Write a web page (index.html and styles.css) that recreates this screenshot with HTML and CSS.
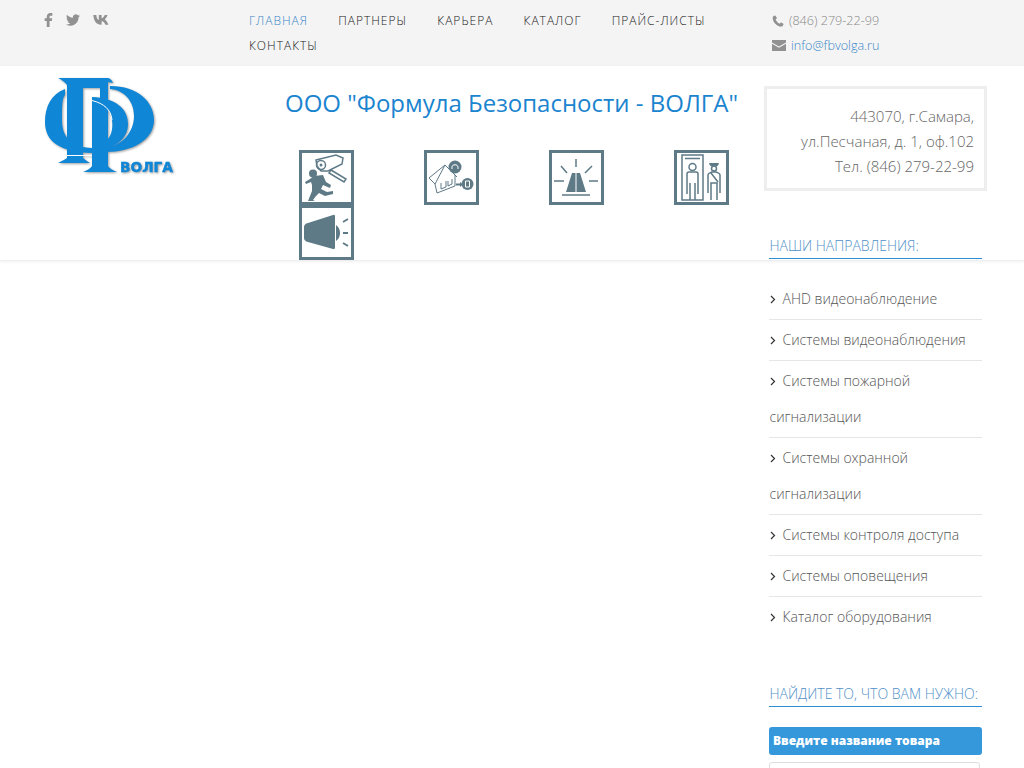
FILE: index.html
```html
<!DOCTYPE html>
<html lang="ru">
<head>
    <meta charset="UTF-8">
    <meta name="viewport" content="width=device-width, initial-scale=1.0">
    <title>Формула Безопасности - ВОЛГА</title>
    <link rel="stylesheet" href="styles.css">
</head>
<body>
    <div class="topbar">
        <div class="social">
            <a href="#" class="social-fb"><svg viewBox="0 0 10 16" width="9" height="14"><path d="M9.4 0H7.2C4.8 0 3 1.6 3 4.2V6H.6v3H3v7h3.2V9h2.6l.4-3H6.200V4.500c0-.9.3-1.500 1.500-1.500h1.700z"/></svg></a>
            <a href="#" class="social-tw"><svg viewBox="0 0 24 24" width="14" height="14"><path d="M23.953 4.57a10 10 0 01-2.825.775 4.958 4.958 0 002.163-2.723c-.951.555-2.005.959-3.127 1.184a4.92 4.92 0 00-8.384 4.482C7.69 8.095 4.067 6.13 1.64 3.162a4.822 4.822 0 00-.666 2.475c0 1.71.87 3.213 2.188 4.096a4.904 4.904 0 01-2.228-.616v.06a4.923 4.923 0 003.946 4.827 4.996 4.996 0 01-2.212.085 4.936 4.936 0 004.604 3.417 9.867 9.867 0 01-6.102 2.105c-.39 0-.779-.023-1.17-.067a13.995 13.995 0 007.557 2.209c9.053 0 13.998-7.496 13.998-13.985 0-.21 0-.42-.015-.63A9.935 9.935 0 0024 4.59z"/></svg></a>
            <a href="#" class="social-vk"><svg viewBox="0 0 17 10" width="17" height="10"><path d="M.3 0h3c.2 2.700 1.300 4.700 2.500 5.100V0h2.800v3.300C9.800 3.100 11 1.700 11.700 0h2.800c-.4 1.900-1.700 3.500-2.700 4.400 1.100.7 2.700 2.400 3.700 5.400h-3.100c-.7-2-1.900-3.400-3.800-3.600v3.600H8C3.600 9.800.7 6 .3 0z"/></svg></a>
        </div>
        <nav class="top-nav">
            <a href="#" class="active">Главная</a>
            <a href="#">Партнеры</a>
            <a href="#">Карьера</a>
            <a href="#">Каталог</a>
            <a href="#">Прайс-листы</a>
            <a href="#">Контакты</a>
        </nav>
        <div class="contacts">
            <div class="contact-row">
                <svg viewBox="0 0 14 14" width="12" height="12"><path d="M3.200.6L.9 1.900C.3 5.600 2.400 9 4.500 10.800c2 1.800 4.700 3.100 7.400 2.600l1.500-2.300c.2-.3.100-.6-.2-.8L10.900 8.800c-.3-.2-.6-.1-.8.100l-1.200 1.300C7.100 9.400 5 7.400 4.200 5.300l1.300-1.200c.2-.2.300-.5.100-.8L4 .8C3.800.5 3.500.400 3.200.6z"/></svg>
                <span>(846) 279-22-99</span>
            </div>
            <div class="contact-row">
                <svg viewBox="0 0 14 11" width="14" height="11"><path d="M0 0h14v2.400L7 6.400 0 2.400zM0 3.800l7 4 7-4V11H0z"/></svg>
                <a href="#">info@fbvolga.ru</a>
            </div>
        </div>
    </div>

    <header class="masthead">
        <a href="#" class="logo">
            <svg viewBox="40 74 140 106" width="140" height="106">
                <path d="M65 89C51 94 45 107 45 122c0 19 14 30 47 31v-5c-21-1-30-11-30-28 0-13 0-22 3-25z"/>
                <path d="M110 86c28 0 44 16 44 34 0 20-22 32-48 32v-5c16-1 28-15 28-31 0-15-10-26-24-27z"/>
                <path d="M92 97c23 1 36 11 36 27 0 12-8 20-20 24v-9c4-5 5-12 4-19-1-10-8-16-20-19z"/>
                <!-- top bar and first stem -->
                <path d="M58 78h49c3 0 5 2 6 5l-5-1v6H83v70c2 2 4 3 7 5H58c3-2 7-3 9-5V85c-2-3-5-5-9-7z"/>
                <!-- second stem -->
                <path d="M100 88h8v78c2 3 5 4 9 6H83c4-2 7-3 9-6V98h8z"/>
                <path class="logo-cut" d="M92 100.500c12 3 19 9 20 19.500"/>
                <path class="logo-cut" d="M67 155.500h25"/>
                <text x="120" y="172" textLength="53" lengthAdjust="spacingAndGlyphs">ВОЛГА</text>
            </svg>
        </a>
        <div class="head-center">
            <h1 class="company">ООО "Формула Безопасности - ВОЛГА"</h1>
            <div class="services">
                <a href="#" class="service"><span class="service-box">
                    <svg viewBox="0 0 49 49">
                        <path class="md" d="M14 7l20-5 7 3-1 6-14 7-7 0-4-5z"/>
                        <circle class="md" cx="19" cy="12" r="4.500"/>
                        <circle class="sol" cx="19" cy="12" r="1.500"/>
                        <path class="md" d="M29 17l15 9-2 3-15-9z"/>
                        <circle class="sol" cx="11" cy="20.500" r="4"/>
                        <path class="sol" d="M12 23l9-1 3 7 5 3-1 3-7-3-2 4 6 3 6-1 0 3-8 2-6-3-3 3-3 4 2 1H6l4-10 0-6-1-3-5 2-1-2 5-3z"/>
                    </svg>
                </span></a>
                <a href="#" class="service"><span class="service-box">
                    <svg viewBox="0 0 49 49">
                        <path class="ln" d="M2 25L18 12l12 12M18 12L8 31 2 25M8 31l2 9 18-7V22"/>
                        <path class="ln" d="M14 30v6l5-2v-6M21 28v5l4-2v-5"/>
                        <circle class="sol" cx="28" cy="14" r="6.500"/>
                        <circle class="sol" cx="40.500" cy="31" r="6"/>
                        <path class="ln-w" d="M25 16v-2c0-3 6-3 6 0v2M38.500 28h4v6h-4z"/>
                        <path class="thk" d="M29 31.500h4"/>
                        <path class="sol" d="M33 29l3 2.500-3 2.500z"/>
                    </svg>
                </span></a>
                <a href="#" class="service"><span class="service-box">
                    <svg viewBox="0 0 49 49">
                        <path class="sol" d="M20 20h3.500v19H14zM24.500 20H28l6 19h-9.500z"/>
                        <path class="md" d="M10 42h28M24 6v8M9 13l6 7M40 13l-7 7M2 28h10M37 28h9"/>
                    </svg>
                </span></a>
                <a href="#" class="service"><span class="service-box">
                    <svg viewBox="0 0 49 49">
                        <path class="md" d="M5 47V2h21v45zM8 5.500h15"/>
                        <circle class="md" cx="15.500" cy="14" r="3.500"/>
                        <path class="md" d="M10 41V21c0-1 1-2 2-2h7c1 0 2 1 2 2v20M13 47V30M18 47V30"/>
                        <path class="thk-s" d="M32.500 10.500h9l-1 2h-7z"/>
                        <circle class="md" cx="37" cy="15.500" r="2.500"/>
                        <path class="md" d="M31 40V22c0-2 2-2 4-3h4c2 1 4 1 4 3v18M34 47V30h6v17M34 20l7 9"/>
                    </svg>
                </span></a>
                <a href="#" class="service"><span class="service-box">
                    <svg viewBox="0 0 49 49">
                        <path class="sol" d="M6 15L31 7c1.500-.5 2 .5 2 1.500v31c0 1-.5 2-2 1.500L6 34c-2.500-.5-4-2-4-4V19c0-2 1.500-3.500 4-4z"/>
                        <path class="sol" d="M34 17c3 2 4 5 4 8s-1 6-4 8z"/>
                        <path class="thk" d="M41 14l5-3M41 25h5M41 35l5 3"/>
                    </svg>
                </span></a>
            </div>
        </div>
        <address class="addr">
            443070, г.Самара,<br>
            ул.Песчаная, д. 1, оф.102<br>
            Тел. (846) 279-22-99
        </address>
    </header>

    <aside class="sidebar">
        <h3 class="side-title">Наши направления:</h3>
        <ul class="side-menu">
            <li><a href="#"><svg class="chev" viewBox="0 0 6 9" width="6" height="9"><path d="M1 1l3.500 3.500L1 8"/></svg>AHD видеонаблюдение</a></li>
            <li><a href="#"><svg class="chev" viewBox="0 0 6 9" width="6" height="9"><path d="M1 1l3.500 3.500L1 8"/></svg>Системы видеонаблюдения</a></li>
            <li><a href="#"><svg class="chev" viewBox="0 0 6 9" width="6" height="9"><path d="M1 1l3.500 3.500L1 8"/></svg>Системы пожарной сигнализации</a></li>
            <li><a href="#"><svg class="chev" viewBox="0 0 6 9" width="6" height="9"><path d="M1 1l3.500 3.500L1 8"/></svg>Системы охранной сигнализации</a></li>
            <li><a href="#"><svg class="chev" viewBox="0 0 6 9" width="6" height="9"><path d="M1 1l3.500 3.500L1 8"/></svg>Системы контроля доступа</a></li>
            <li><a href="#"><svg class="chev" viewBox="0 0 6 9" width="6" height="9"><path d="M1 1l3.500 3.500L1 8"/></svg>Системы оповещения</a></li>
            <li><a href="#"><svg class="chev" viewBox="0 0 6 9" width="6" height="9"><path d="M1 1l3.500 3.500L1 8"/></svg>Каталог оборудования</a></li>
        </ul>
        <h3 class="side-title search-title">Найдите то, что вам нужно:</h3>
        <div class="search-label">Введите название товара</div>
        <input class="search-input" type="text">
    </aside>
</body>
</html>
```

FILE: styles.css
```css
html, body {
    height: 768px;
    overflow: hidden;
}

body {
    margin: 0;
    font-family: 'Open Sans', sans-serif;
    font-weight: 300;
    background-color: #ffffff;
    color: #555555;
}

a {
    text-decoration: none;
    color: inherit;
}

.topbar {
    display: flex;
    height: 66px;
    box-sizing: border-box;
    padding-top: 8px;
    background-color: #f4f4f4;
}

.social {
    display: flex;
    align-items: flex-start;
    width: 205px;
    margin-left: 44px;
    padding-top: 5px;
    box-sizing: border-box;
}

.social a {
    display: block;
    line-height: 0;
}

.social svg {
    fill: #919191;
}

.social-tw {
    margin-left: 13px;
}

.social-vk {
    margin-left: 13px;
    padding-top: 2px;
}

.top-nav {
    width: 500px;
}

.top-nav a {
    display: inline-block;
    margin-right: 26px;
    font-size: 12px;
    line-height: 25px;
    letter-spacing: 1px;
    text-transform: uppercase;
    color: #222222;
}

.top-nav a.active {
    color: #3a87c8;
}

.contacts {
    margin-left: 23px;
    font-size: 12.600px;
    color: #888888;
}

.contact-row {
    display: flex;
    align-items: center;
    height: 25px;
}

.contact-row svg {
    margin-right: 5px;
    fill: #919191;
}

.contact-row a {
    color: #3a87c8;
}

.masthead {
    display: flex;
    height: 195px;
    box-sizing: border-box;
    border-bottom: 1px solid #eeeeee;
    box-shadow: 0 1px 3px rgba(0, 0, 0, 0.06);
}

.logo {
    flex: none;
    width: 224px;
    margin-left: 40px;
    padding-top: 8px;
}

.logo svg {
    filter: drop-shadow(1.5px 1.5px 1px rgba(60, 60, 60, 0.5));
}

.logo path, .logo text {
    fill: #0f86d6;
}

.logo .logo-cut {
    fill: none;
    stroke: #ffffff;
    stroke-width: 1;
}

.logo text {
    font-family: 'DejaVu Sans', sans-serif;
    font-size: 14px;
    font-weight: 700;
    stroke: #0f86d6;
    stroke-width: 0.400;
}

.head-center {
    flex: none;
    width: 500px;
}

.company {
    margin: 20px 0 0 21px;
    font-size: 24px;
    line-height: 34px;
    font-weight: 400;
    white-space: nowrap;
    color: #1b84cf;
}

.services {
    display: flex;
    flex-wrap: wrap;
    margin-top: 30px;
}

.service {
    display: flex;
    justify-content: center;
    width: 125px;
}

.service-box {
    display: block;
    width: 55px;
    height: 55px;
    box-sizing: border-box;
    border: 3px solid #5f7a87;
}

.service-box svg {
    display: block;
    width: 49px;
    height: 49px;
}

.ln, .ln-w, .md, .thk, .thk-s {
    fill: none;
    stroke: #5f7a87;
}

.ln {
    stroke-width: 1;
}

.md {
    stroke-width: 1.500;
}

.ln-w {
    stroke: #ffffff;
    stroke-width: 1;
}

.thk {
    stroke-width: 2;
}

.thk-s {
    fill: #5f7a87;
    stroke-width: 1;
}

.sol {
    fill: #5f7a87;
}

.addr {
    flex: none;
    align-self: flex-start;
    width: 223px;
    height: 105px;
    margin: 20px 0 0;
    padding: 15px 10px 0 0;
    box-sizing: border-box;
    border: 3px solid #eeeeee;
    font-style: normal;
    font-size: 15px;
    line-height: 25px;
    text-align: right;
    color: #666666;
}

.sidebar {
    position: relative;
    width: 213px;
    margin: -25px 0 0 769px;
}

.side-title {
    margin: 0;
    padding: 0 0 2px 0.500px;
    border-bottom: 1px solid #2f8dd3;
    font-size: 14px;
    line-height: 20px;
    font-weight: 300;
    text-transform: uppercase;
    white-space: nowrap;
    color: #4f90c8;
}

.side-menu {
    margin: 20px 0 0;
    padding: 0;
    list-style: none;
}

.side-menu li {
    padding: 2px 0 2px 0.500px;
    border-bottom: 1px solid #e6e6e6;
    font-size: 14px;
    line-height: 36px;
}

.side-menu li:last-child {
    border-bottom: none;
}

.chev {
    margin: 0 7px 0 0;
    fill: none;
    stroke: #333333;
    stroke-width: 1.200;
}

.search-title {
    margin-top: 47px;
}

.search-label {
    margin-top: 20px;
    height: 28px;
    padding-left: 4px;
    border-radius: 3px;
    background-color: #3498db;
    font-size: 12px;
    line-height: 28px;
    font-weight: 800;
    color: #ffffff;
}

.search-input {
    display: block;
    width: 211px;
    height: 30px;
    margin-top: 7px;
    box-sizing: border-box;
    border: 1px solid #dddddd;
    border-radius: 3px;
}
```
